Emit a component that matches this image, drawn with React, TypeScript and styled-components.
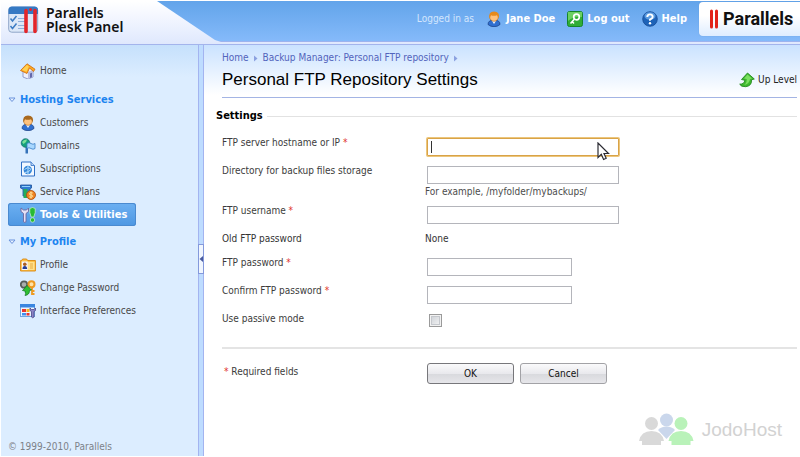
import React from "react";
import styled, { createGlobalStyle, css } from "styled-components";

const sans = `"DejaVu Sans Condensed", Tahoma, sans-serif`;

const GlobalStyle = createGlobalStyle`
  * { box-sizing: border-box; }
  body { margin: 0; background: #fff; color: #3c3c3c; font: 10px/14px ${sans}; }
  a { color: inherit; text-decoration: none; }
  svg { display: block; flex: none; }
  h1, h2, h3, p, ul { margin: 0; padding: 0; font: inherit; }
  ul { list-style: none; }
`;

const Page = styled.div`
  display: flex;
  flex-direction: column;
  height: 100vh;
  overflow: hidden;
  border: solid #fff;
  border-width: 1px 0 1px 1px;
  position: relative;
`;

/* Header */
const Header = styled.header`
  display: grid;
  grid-template-columns: 156px 1fr;
  flex: none;
  height: 44px;
  background: linear-gradient(#fff, #f4f7ff 35%, #dfe8fd);
  border-bottom: 1px solid #a3b4ec;
`;
const Brand = styled.a`
  display: flex;
  align-items: flex-start;
  gap: 7px;
  padding: 5px 0 0 7px;
  color: #111;
  font: 600 14px/14px "Noto Sans", sans-serif;
  white-space: nowrap;
`;
const TopBar = styled.div`
  display: flex;
  align-items: flex-start;
  justify-content: flex-end;
  height: 41px;
  background: linear-gradient(#62a4ea, #85bafa);
  border-bottom: 1px solid #9db3ee;
  clip-path: polygon(0 0, 100% 0, 100% 100%, 64px 100%, 58px 39px);
`;
const UserNav = styled.nav`
  display: flex;
  align-items: center;
  height: 36px;
  margin-right: 12px;
  color: #fff;
`;
const LoggedIn = styled.span`
  color: #d3e6fd;
  margin-right: 12px;
`;
const UserLink = styled.a`
  display: flex;
  align-items: center;
  gap: 4px;
  margin-left: 12px;
  font-size: 11px;
  font-weight: bold;
  &:first-of-type { margin-left: 0; }
`;
const CompanyLogo = styled.a`
  display: flex;
  align-items: center;
  gap: 3px;
  width: 101px;
  height: 34px;
  margin-top: 1px;
  padding-left: 10px;
  border-radius: 4px 0 0 4px;
  background: linear-gradient(#fff, #fff 40%, #dfedff);
  box-shadow: 0 0 1px #5f8ec8;
  color: #111;
  font: bold 18px/20px Roboto, sans-serif;
`;

/* Sidebar */
const Body = styled.div`
  display: flex;
  flex: 1;
  min-height: 0;
`;
const Sidebar = styled.aside`
  display: flex;
  flex-direction: column;
  flex: none;
  width: 198px;
  background: linear-gradient(#c5e0fc, #dcedff 32px);
  border-right: 1px solid #a3b4f0;
`;
const Splitter = styled.div`
  display: flex;
  align-items: flex-start;
  flex: none;
  width: 5px;
  padding-top: 199px;
  background: #bedcff;
  border-right: 1px solid #a3b4f0;
`;
const Collapse = styled.button`
  display: flex;
  align-items: center;
  justify-content: flex-end;
  flex: none;
  width: 6px;
  height: 30px;
  padding: 0;
  margin-left: -1px;
  background: #f0f6ff;
  border: 1px solid #8499dc;
`;
const HomeRow = styled.div`
  padding: 14px 0 7px 7px;
`;
const GroupTitle = styled.h2`
  display: flex;
  align-items: center;
  gap: 4px;
  height: 22px;
  padding-left: 7px;
  color: #1c84f0;
  font-size: 11px;
  font-weight: bold;
`;
const NavList = styled.ul`
  padding: 0 0 5px 7px;
`;
const NavLink = styled.a<{ $active?: boolean }>`
  display: flex;
  align-items: center;
  gap: 4px;
  width: 128px;
  height: 23px;
  padding-left: 12px;
  white-space: nowrap;
  color: #484848;
  ${(p) =>
    p.$active &&
    css`
      color: #fff;
      font-size: 11px;
      font-weight: bold;
      background: linear-gradient(#6cb0f2, #4e97e2);
      box-shadow: inset 0 0 0 1px #4a8ad0;
      border-radius: 3px;
    `}
`;
const Copyright = styled.footer`
  height: 16px;
  margin-top: auto;
  padding-left: 7px;
  overflow: hidden;
  color: #7c8289;
`;

/* Content */
const Main = styled.main`
  flex: 1;
  min-width: 0;
  padding: 6px 3px 0 12px;
  background: linear-gradient(#cae2ff, #fff 50px);
`;
const PageHead = styled.div`
  margin-left: 6px;
  border-bottom: 1px solid #a3b4e4;
  height: 47px;
`;
const Breadcrumbs = styled.nav`
  display: flex;
  align-items: center;
  gap: 5px;
  color: #5264bc;
`;
const TitleRow = styled.div`
  display: flex;
  align-items: center;
  justify-content: space-between;
  height: 26px;
  margin-top: 2px;
`;
const Title = styled.h1`
  color: #000;
  font: 17px/24px "Liberation Sans", Arial, sans-serif;
`;
const UpLevel = styled.a`
  display: flex;
  align-items: center;
  gap: 3px;
  color: #222;
`;
const SectionTitle = styled.h3`
  display: flex;
  align-items: center;
  gap: 4px;
  margin: 11px 0 10px;
  color: #000;
  font-size: 11px;
  font-weight: bold;
  &::after { content: ""; flex: 1; height: 1px; background: #e2e2e2; }
`;
const Form = styled.form`
  padding-left: 6px;
`;
const Row = styled.div<{ $short?: boolean }>`
  display: grid;
  grid-template-columns: 203px 1fr;
  min-height: ${(p) => (p.$short ? 24 : 28)}px;
`;
const Label = styled.label`
  padding-top: 3px;
`;
const Star = styled.span`
  color: #e0342c;
`;
const Value = styled.div`
  padding: 3px 0 0;
  color: #333;
`;
const Field = styled.div<{ $narrow?: boolean }>`
  position: relative;
  width: ${(p) => (p.$narrow ? 145 : 192)}px;
  margin: 5px 0 0 2px;
`;
const TextInput = styled.input<{ $focused?: boolean }>`
  display: block;
  width: 100%;
  height: 18px;
  padding: 0 4px;
  border: 1px solid #b4b5bb;
  outline: none;
  background: #fff;
  font: inherit;
  ${(p) =>
    p.$focused &&
    css`
      border-color: #d9a347;
      box-shadow: 0 0 0 1px #ecc67c;
      border-radius: 1px;
    `}
`;
const Caret = styled.span`
  position: absolute;
  left: 4px;
  top: 3px;
  width: 1px;
  height: 12px;
  background: #333;
`;
const Pointer = styled.svg`
  position: absolute;
  left: 170px;
  top: 4px;
  z-index: 1;
`;
const Hint = styled.p`
  height: 17px;
  padding-top: 1px;
  color: #4c4c4c;
`;
const Checkbox = styled.input`
  appearance: none;
  display: block;
  width: 13px;
  height: 13px;
  margin: 5px 0 0 4px;
  border: 1px solid #9a9a9a;
  box-shadow: inset 0 0 0 1px #f2f2f2, inset 0 0 0 2px #c5c8cd;
  background: linear-gradient(135deg, #c9cdd3, #f7f7f7);
`;
const Actions = styled.div`
  display: grid;
  grid-template-columns: 205px 1fr;
  margin-top: 10px;
  padding-top: 14px;
  border-top: 2px solid #e4e4e4;
`;
const Required = styled.p`
  padding: 2px 0 0 2px;
`;
const Buttons = styled.div`
  display: flex;
  gap: 6px;
`;
const Button = styled.button<{ $primary?: boolean }>`
  width: 87px;
  height: 21px;
  padding: 0;
  border: 1px solid ${(p) => (p.$primary ? "#77777b" : "#a2a2a6")};
  border-radius: 3px;
  background: linear-gradient(#fafafb, #e9e9ed 50%, #d9dade 55%, #e6e6ea);
  color: #111;
  font: inherit;
`;
const Watermark = styled.div`
  position: absolute;
  right: 18px;
  bottom: 10px;
  display: flex;
  align-items: center;
  gap: 7px;
  color: #d2d2d2;
  font: 19px/20px "Liberation Sans", Arial, sans-serif;
`;

/* Icons */
const Svg = ({ children }: { children: React.ReactNode }) => (
  <svg width="16" height="16" viewBox="0 0 16 16" aria-hidden="true">{children}</svg>
);

const BrandMark = () => (
  <svg width="31" height="29" viewBox="0 0 31 29" aria-hidden="true">
    <rect x="0.7" y="1.2" width="29" height="25" rx="3" fill="#dce8f8" stroke="#8fa6c8" />
    <path d="M0.5 8V4q0-3.500 3.500-3.500h22.500q3.500 0 3.500 3.500v4z" fill="#3579c4" />
    <path d="M2.500 12.500l2 2.500 4-5M2.500 20l2 2.500 4-5" fill="none" stroke="#3c7cc4" strokeWidth="1.500" />
    <path d="M10 12.500h7M10 15.500h7M10 19.500h7M10 22.500h7" stroke="#8fb0dc" />
    <path d="M18 4.500v21M27 4.500v21" stroke="#e3252a" strokeWidth="3.600" strokeLinecap="round" />
    <circle cx="22.500" cy="3.500" r="1.500" fill="#e3252a" />
  </svg>
);

const HomeIcon = () => (
  <Svg>
    <path d="M3 8l5-5 5 4v7l-5 2-5-2z" fill="#eef0fb" stroke="#8289bd" strokeWidth="0.800" />
    <path d="M8 9l5-2v7l-5 2z" fill="#b9bfe3" />
    <path d="M10 10.500l2-.8v4.500l-2 .8z" fill="#6369ab" />
    <path d="M0.500 7.500L7 .8l8 5.400-1.500 2.300L9.500 5 7 10.500z" fill="#ffa91e" stroke="#cc6a10" strokeWidth="0.800" />
    <path d="M2 7l5-5 1.800 1.500L6.500 8.800z" fill="#ffd254" />
  </Svg>
);

const PersonIcon = ({ hair = "#a8691f" }: { hair?: string }) => (
  <Svg>
    <path d="M2 13.500q0-4.500 6-4.500t6 4.500Q11.500 15.700 8 15.700t-6-2.200z" fill="#2f6fd0" stroke="#173b80" strokeWidth="0.700" />
    <path d="M6 10l2 3 2-3z" fill="#e9f2ff" />
    <circle cx="8" cy="6" r="4.300" fill="#ffc27c" stroke="#b26a1d" strokeWidth="0.600" />
    <path d="M3.200 7.500Q2.300.4 8 .4q6 0 5 6.800L11 4.200Q7.500 5.500 5 4.200z" fill={hair} />
  </Svg>
);

const DomainsIcon = () => (
  <Svg>
    <path d="M5.500 6h2.500v9.500H5.500z" fill="#3572b9" />
    <circle cx="5.500" cy="5" r="4.300" fill="#16a07e" stroke="#0c6664" strokeWidth="0.700" />
    <path d="M2 4q2-3 5-2.500L6 4 3.500 6z" fill="#7be098" />
    <path d="M7 5.500q2-1.500 4 0t4 0v5q-2 1.500-4 0t-4 0z" fill="#a9d8ff" stroke="#3b80c8" strokeWidth="0.800" />
  </Svg>
);

const SubscriptionsIcon = () => (
  <Svg>
    <path d="M1.500 1h9.500l3.500 3.500V15h-13z" fill="#f2f8ff" stroke="#2f6fc4" />
    <path d="M11 1v3.500h3.500" fill="#b9d6f8" stroke="#2f6fc4" strokeWidth="0.800" />
    <circle cx="7.800" cy="9" r="4.200" fill="#3687d8" />
    <path d="M4.500 8.500q3-3 6-1M5 11.500q4 0 6.300-3.500M8 5v8" stroke="#b7e0ff" fill="none" />
  </Svg>
);

const PlansIcon = () => (
  <Svg>
    <path d="M0.500 1h11v3l-1.500 1v7H3V5L.5 4z" fill="#2f7bd0" stroke="#1d4f99" strokeWidth="0.800" />
    <path d="M2 2.500h8" stroke="#8fd0ff" />
    <path d="M3.500 5h4v9h-4z" fill="#25ac5b" />
    <circle cx="11" cy="11" r="4.500" fill="#ef8422" stroke="#a94b0f" strokeWidth="0.800" />
    <path d="M12.800 9q-3.500-1-3.500.8 0 1 1.700 1.200t1.700 1.300q-.3 1.400-3.500.6M11 7.500v7" stroke="#ffe29b" fill="none" />
  </Svg>
);

const ToolsIcon = () => (
  <Svg>
    <path d="M1 1v3.500l2.500 2V14q0 1.500 1.300 1.500T6 14V6.500l2.500-2V1L6.500 3h-3z" fill="#e4e1f6" stroke="#6c67a0" strokeWidth="0.900" />
    <path d="M9.800 1.500q2.700-2 5.400 0v4L13.800 10h-2.600L9.800 5.500z" fill="#28ba35" stroke="#e6ffe4" strokeWidth="0.600" />
    <circle cx="12.500" cy="13" r="2.200" fill="#28ba35" stroke="#e6ffe4" strokeWidth="0.600" />
  </Svg>
);

const ProfileIcon = () => (
  <Svg>
    <path d="M0.600 3.500h1l1-1.500h4l1 1.500h7.800V14H.6z" fill="#ffc247" stroke="#d9860c" strokeWidth="0.900" />
    <rect x="8" y="5" width="6.500" height="8" fill="#ffe08d" />
    <path d="M10 7h3M10 9h3M10 11h3" stroke="#df971f" strokeWidth="0.700" />
    <rect x="1.800" y="4.500" width="6" height="8.500" fill="#f6f7ff" />
    <path d="M2.500 12q0-3 2.300-3t2.300 3z" fill="#273f96" />
    <circle cx="4.800" cy="7.200" r="1.800" fill="#ac5e1e" />
  </Svg>
);

const PasswordIcon = () => (
  <Svg>
    <circle cx="4" cy="4.500" r="3.200" fill="#a9afae" stroke="#555d5c" strokeWidth="1.800" />
    <path d="M5 8l2 5" stroke="#555d5c" strokeWidth="2" />
    <circle cx="11.500" cy="4.300" r="3" fill="#ffe3a6" stroke="#ee9a20" strokeWidth="2" />
    <path d="M12 7.500v7.500M12 11h2.500M12 14h2.500" stroke="#ee9a20" strokeWidth="1.800" />
    <path d="M2.500 10.500L7 5.500l4.500 4.500-2 .5q0 4.500-4.500 5 1.200-1.500 0-4.500z" fill="#2fbf33" stroke="#10751d" strokeWidth="0.700" />
  </Svg>
);

const PreferencesIcon = () => (
  <Svg>
    <rect x="0.500" y="1.500" width="14" height="12" fill="#edf5ff" stroke="#6fa6e0" />
    <path d="M0 1h15v3.500H0z" fill="#3a86e0" />
    <rect x="2" y="6" width="4" height="3" fill="#e8352f" />
    <rect x="2" y="10" width="4" height="2.500" fill="#3f8ff0" />
    <rect x="6.500" y="6" width="3" height="3" fill="#f5b71c" />
    <rect x="6.500" y="10" width="3" height="2.500" fill="#e8352f" />
    <path d="M10 5v2.500l1.500 1V14q1 1.500 2.500 0V8.500l1.500-1V5l-1.500 1.500h-2.500z" fill="#8b84c6" stroke="#4d4789" strokeWidth="0.800" />
  </Svg>
);

const LogoutIcon = () => (
  <Svg>
    <rect x="0.500" y="0.500" width="15" height="15" rx="2" fill="#30ad36" stroke="#15862a" />
    <path d="M1 1h14v5Q7 5 1 10z" fill="#6bd063" />
    <circle cx="9.500" cy="6" r="2.800" fill="none" stroke="#fff" strokeWidth="1.700" />
    <path d="M7.500 8L3.500 12.500M5 10.500l2 2" stroke="#fff" strokeWidth="1.600" />
  </Svg>
);

const HelpIcon = () => (
  <Svg>
    <circle cx="8" cy="8" r="7.300" fill="#1e63b8" stroke="#164a93" strokeWidth="0.800" />
    <ellipse cx="8" cy="5" rx="5.500" ry="3.800" fill="#5b9be0" />
    <path d="M5.300 6q0-2.600 2.700-2.600T10.700 6Q10.700 7.300 8 8.600v1.200" fill="none" stroke="#fff" strokeWidth="1.900" />
    <circle cx="8" cy="12.200" r="1.200" fill="#fff" />
  </Svg>
);

const UpIcon = () => (
  <Svg>
    <path d="M8.500 1l6.800 6-2.800.8Q13 14 6.500 14.700 2 14.800.7 12.200q4.800 0 5.100-4L2.500 7.500z" fill="#3fb92f" stroke="#248a1e" strokeWidth="0.900" />
    <path d="M8.500 2.500L13 6.500l-2 .6Q10.500 12 5 13q3-1.500 2.700-6L5 6.500z" fill="#7be060" />
  </Svg>
);

const GroupArrow = () => (
  <svg width="8" height="6" viewBox="0 0 8 6" aria-hidden="true">
    <path d="M1 1h6L4 4.500z" fill="#e9f3ff" stroke="#6b93dc" />
  </svg>
);
const CrumbArrow = () => (
  <svg width="4" height="7" viewBox="0 0 4 7" aria-hidden="true">
    <path d="M0 0.500l3.500 3L0 6.500z" fill="#8ba1e0" />
  </svg>
);
const CollapseArrow = () => (
  <svg width="4" height="6" viewBox="0 0 4 6" aria-hidden="true">
    <path d="M4 0L0.500 3 4 6z" fill="#47599e" />
  </svg>
);
const CompanyBars = () => (
  <svg width="11" height="20" viewBox="0 0 11 20" aria-hidden="true">
    <path d="M2.500 2v16M7.500 2v16" stroke="#e2231a" strokeWidth="3" strokeLinecap="round" />
  </svg>
);
const People = () => (
  <svg width="57" height="33" viewBox="0 0 57 33" aria-hidden="true">
    <g fill="#cad7ec">
      <circle cx="28.500" cy="7" r="6.500" />
      <path d="M20 17q3-3.500 8.500-3.500T37 17l-8.500 9z" />
    </g>
    <g fill="#d9d9d9">
      <circle cx="13.500" cy="10.500" r="6.500" />
      <path d="M1 28q2-10 12.500-10T26 28h-3v4H4v-4z" />
    </g>
    <g fill="#b9f2b9">
      <circle cx="43" cy="10.500" r="6.500" />
      <path d="M30.500 28q2-10 12.500-10t12.500 10h-3v4h-19v-4z" />
    </g>
  </svg>
);

const hosting = [
  { label: "Customers", icon: <PersonIcon /> },
  { label: "Domains", icon: <DomainsIcon /> },
  { label: "Subscriptions", icon: <SubscriptionsIcon /> },
  { label: "Service Plans", icon: <PlansIcon /> },
  { label: "Tools & Utilities", icon: <ToolsIcon />, active: true },
];
const profile = [
  { label: "Profile", icon: <ProfileIcon /> },
  { label: "Change Password", icon: <PasswordIcon /> },
  { label: "Interface Preferences", icon: <PreferencesIcon /> },
];

type Item = { label: string; icon: React.ReactNode; active?: boolean };
const NavGroup = ({ title, items }: { title: string; items: Item[] }) => (
  <>
    <GroupTitle><GroupArrow />{title}</GroupTitle>
    <NavList>
      {items.map((i) => (
        <li key={i.label}>
          <NavLink href="#" $active={i.active}>{i.icon}{i.label}</NavLink>
        </li>
      ))}
    </NavList>
  </>
);

type FormRowProps = {
  id: string;
  label: string;
  required?: boolean;
  type?: string;
  focused?: boolean;
  hint?: string;
};
const FormRow = ({ id, label, required, type = "text", focused, hint }: FormRowProps) => (
  <Row>
    <Label htmlFor={id}>{label}{required && <Star> *</Star>}</Label>
    <div>
      <Field $narrow={type === "password"}>
        <TextInput id={id} type={type} $focused={focused} />
        {focused && (
          <>
            <Caret />
            <Pointer width="13" height="19" viewBox="0 0 13 19" aria-hidden="true">
              <path d="M1 1v14.500l3.300-3.200 2.300 5.200 2.600-1.200L7 11.500h4.500z" fill="#fff" stroke="#2b2b33" strokeWidth="1.200" />
            </Pointer>
          </>
        )}
      </Field>
      {hint && <Hint>{hint}</Hint>}
    </div>
  </Row>
);

export default function App() {
  return (
    <>
      <GlobalStyle />
      <Page>
        <Header>
          <Brand href="#"><BrandMark /><span>Parallels<br />Plesk Panel</span></Brand>
          <TopBar>
            <UserNav>
              <LoggedIn>Logged in as</LoggedIn>
              <UserLink href="#"><PersonIcon hair="#e58a1c" />Jane Doe</UserLink>
              <UserLink href="#"><LogoutIcon />Log out</UserLink>
              <UserLink href="#"><HelpIcon />Help</UserLink>
            </UserNav>
            <CompanyLogo href="#"><CompanyBars />Parallels</CompanyLogo>
          </TopBar>
        </Header>
        <Body>
          <Sidebar>
            <HomeRow><NavLink href="#"><HomeIcon />Home</NavLink></HomeRow>
            <NavGroup title="Hosting Services" items={hosting} />
            <NavGroup title="My Profile" items={profile} />
            <Copyright>© 1999-2010, Parallels<br />All rights reserved.</Copyright>
          </Sidebar>
          <Splitter>
            <Collapse type="button" aria-label="Collapse sidebar"><CollapseArrow /></Collapse>
          </Splitter>
          <Main>
            <PageHead>
              <Breadcrumbs>
                <a href="#">Home</a><CrumbArrow />
                <a href="#">Backup Manager: Personal FTP repository</a><CrumbArrow />
              </Breadcrumbs>
              <TitleRow>
                <Title>Personal FTP Repository Settings</Title>
                <UpLevel href="#"><UpIcon />Up Level</UpLevel>
              </TitleRow>
            </PageHead>
            <SectionTitle>Settings</SectionTitle>
            <Form onSubmit={(e) => e.preventDefault()}>
              <FormRow id="host" label="FTP server hostname or IP" required focused />
              <FormRow id="dir" label="Directory for backup files storage" hint="For example, /myfolder/mybackups/" />
              <FormRow id="user" label="FTP username" required />
              <Row $short>
                <Value>Old FTP password</Value>
                <Value>None</Value>
              </Row>
              <FormRow id="pass" label="FTP password" type="password" required />
              <FormRow id="confirm" label="Confirm FTP password" type="password" required />
              <Row>
                <Label htmlFor="passive">Use passive mode</Label>
                <Checkbox id="passive" type="checkbox" />
              </Row>
              <Actions>
                <Required><Star>* </Star>Required fields</Required>
                <Buttons>
                  <Button type="submit" $primary>OK</Button>
                  <Button type="button">Cancel</Button>
                </Buttons>
              </Actions>
            </Form>
          </Main>
        </Body>
        <Watermark><People />JodoHost</Watermark>
      </Page>
    </>
  );
}
